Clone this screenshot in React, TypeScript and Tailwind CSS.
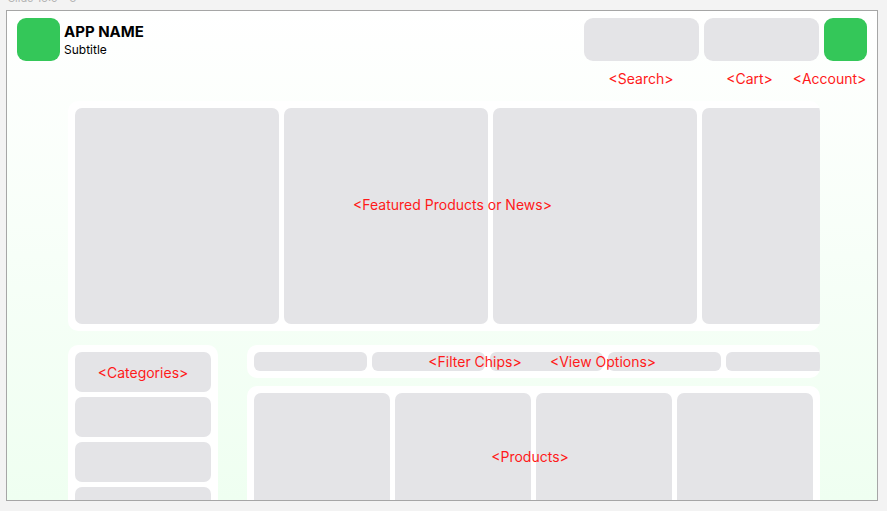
import React from "react";

const Label = ({ x, y, text }: { x: number; y: number; text: string }) => (
  <div
    className="absolute -translate-x-1/2 -translate-y-1/2 whitespace-nowrap text-[14px] leading-[16px] text-[#ff1a1a]"
    style={{ left: x - 7, top: y - 11, fontFamily: 'Inter, "Liberation Sans", Arial, sans-serif' }}
  >
    {text}
  </div>
);

export default function App() {
  const gray = "bg-[#e4e4e7]";
  return (
    <div
      className="w-[887px] h-[511px] bg-[#f3f3f3] overflow-hidden relative"
      style={{ fontFamily: 'Inter, "Liberation Sans", Arial, sans-serif' }}
    >
      <div className="absolute left-[8px] -top-[8px] text-[11px] leading-[13px] text-[#b5b5b5]">
        Slide 16:9 – 3
      </div>
      <div className="absolute left-[6px] top-[10px] w-[872px] h-[491px] border border-[#a6a6a6] overflow-hidden bg-gradient-to-b from-white to-[#effff1]">
        {/* Header */}
        <div className="flex justify-between items-start pl-[10px] pr-[10px] pt-[7px]">
          <div className="flex items-start gap-[4px]">
            <div className="w-[43px] h-[43px] rounded-[9px] bg-[#34c759]" />
            <div className="flex flex-col pt-[5px]">
              <div className="text-[15px] leading-[17px] font-bold text-black">APP NAME</div>
              <div className="text-[12px] leading-[15px] text-black mt-[2px]">Subtitle</div>
            </div>
          </div>
          <div className="flex gap-[5px]">
            <div className={`w-[115px] h-[43px] rounded-[9px] ${gray}`} />
            <div className={`w-[115px] h-[43px] rounded-[9px] ${gray}`} />
            <div className="w-[43px] h-[43px] rounded-[9px] bg-[#34c759]" />
          </div>
        </div>

        {/* Main column */}
        <div className="ml-[61px] w-[752px] mt-[40px] flex flex-col">
          <div className="h-[230px] rounded-[10px] bg-white p-[7px] flex gap-[5px] overflow-hidden">
            {[0, 1, 2, 3].map((i) => (
              <div key={i} className={`w-[204px] h-[216px] shrink-0 rounded-[7px] ${gray}`} />
            ))}
          </div>

          <div className="mt-[14px] flex gap-[29px]">
            <div className="w-[150px] rounded-[10px] bg-white p-[7px] flex flex-col gap-[5px]">
              {[0, 1, 2, 3].map((i) => (
                <div key={i} className={`h-[40px] rounded-[7px] ${gray}`} />
              ))}
            </div>
            <div className="w-[573px] flex flex-col gap-[8px]">
              <div className="h-[33px] rounded-[10px] bg-white p-[7px] flex gap-[5px] overflow-hidden">
                {[0, 1, 2, 3, 4].map((i) => (
                  <div key={i} className={`w-[113px] h-[19px] shrink-0 rounded-[6px] ${gray}`} />
                ))}
              </div>
              <div className="rounded-[10px] bg-white p-[7px] flex gap-[5px]">
                {[0, 1, 2, 3].map((i) => (
                  <div key={i} className={`w-[136px] h-[160px] shrink-0 rounded-[7px] ${gray}`} />
                ))}
              </div>
            </div>
          </div>
        </div>

        <Label x={641} y={79} text="<Search>" />
        <Label x={749.5} y={79} text="<Cart>" />
        <Label x={829.5} y={79} text="<Account>" />
        <Label x={452.5} y={205} text="<Featured Products or News>" />
        <Label x={143} y={373} text="<Categories>" />
        <Label x={475} y={362} text="<Filter Chips>" />
        <Label x={603} y={362} text="<View Options>" />
        <Label x={530} y={457} text="<Products>" />
      </div>
    </div>
  );
}
